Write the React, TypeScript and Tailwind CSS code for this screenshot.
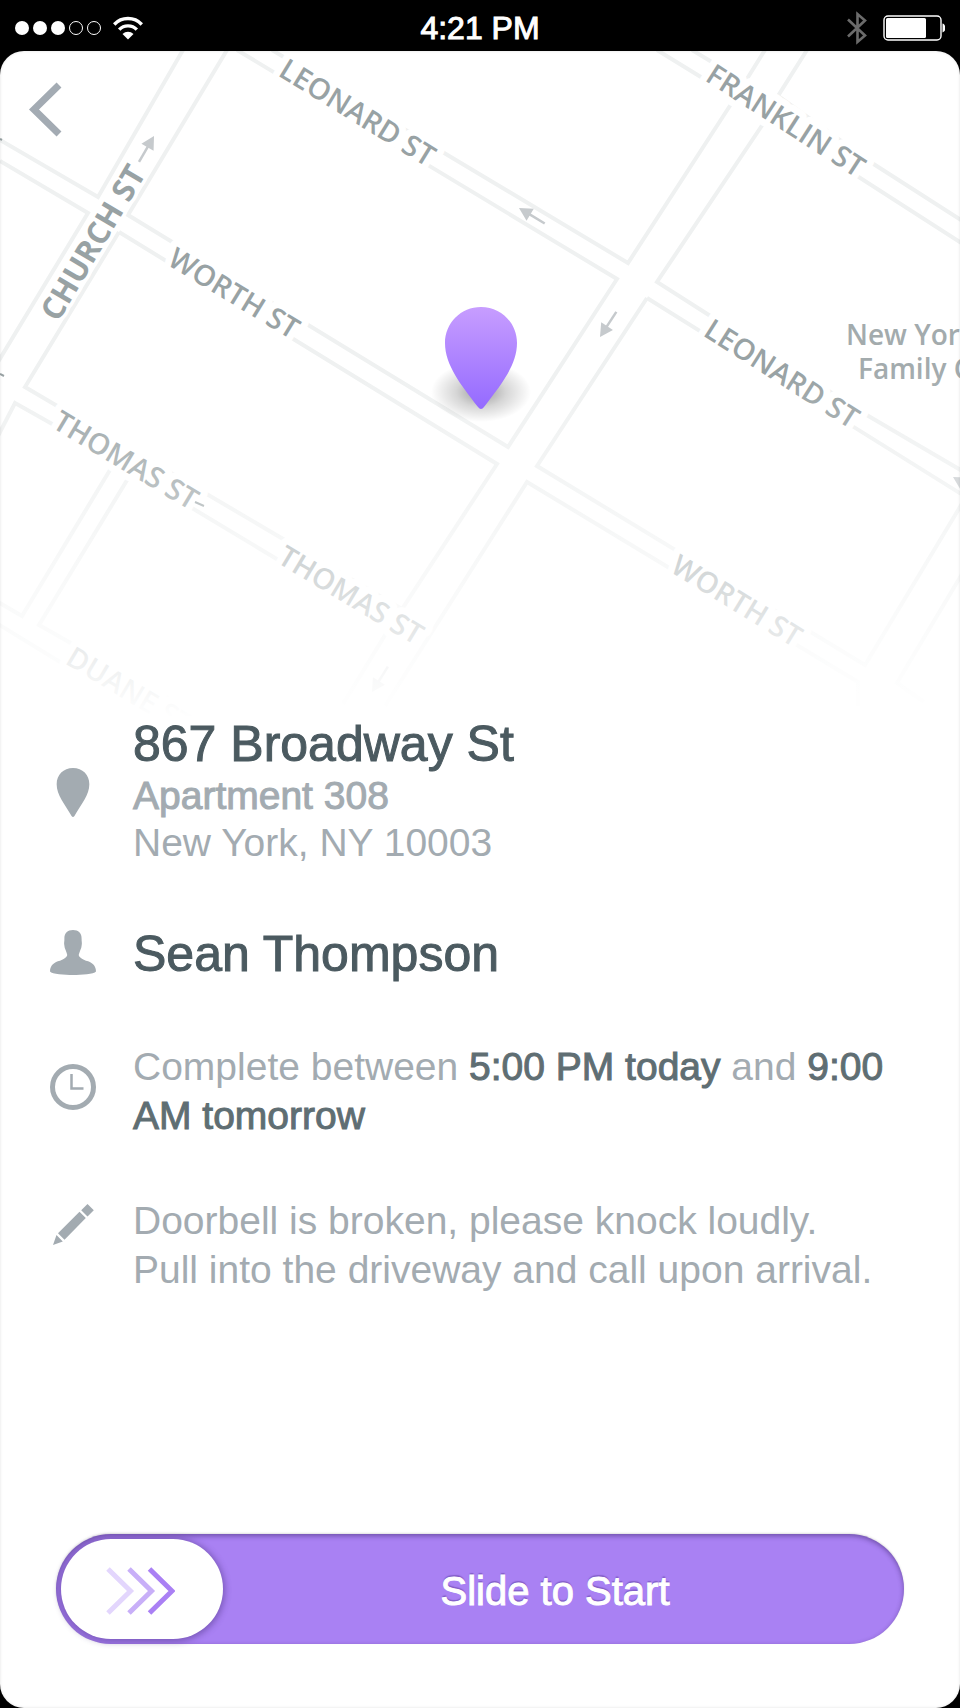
import React, { useState } from 'react';

interface StreetLabel { text: string; x: number; y: number; angle: number; }

// City blocks; the streets are the gaps between them
const blocks: string[] = [
    '183,50 98,197 0,140',
    '0,161 88,213 -2,362',
    '237,50 617,279 508,447 128,215 227,50',
    '657,50 735,98 628,263 272,50',
    '692,50 745,82 765,50',
    '807,50 778,96 872,163 964,222',
    '966,246 767,118 657,282 712,317 865,414 964,472',
    '647,298 966,497 865,665 537,466 647,298',
    '385,706 527,482 858,682 858,706',
    '962,574 897,683 924,702',
    '119,232 497,464 402,609 25,387 119,232',
    '-2,436 15,403 116,460 22,616 -2,602',
    '210,722 39,625 132,472 390,627 343,704',
    '-2,624 60,662 140,706',
];

const labels: StreetLabel[] = [
    { text: 'LEONARD ST', x: 277, y: 75, angle: 31.6 },
    { text: 'FRANKLIN ST', x: 704, y: 80, angle: 32.8 },
    { text: 'WORTH ST', x: 166, y: 264, angle: 31.2 },
    { text: 'LEONARD ST', x: 702, y: 335, angle: 32.4 },
    { text: 'THOMAS ST', x: 51, y: 427, angle: 31 },
    { text: 'THOMAS ST', x: 276, y: 562, angle: 31 },
    { text: 'WORTH ST', x: 669, y: 571, angle: 31.6 },
    { text: 'DUANE ST', x: 64, y: 663, angle: 31 },
];

// One-way arrows: tip position and heading in degrees
const arrows = [
    { x: 154, y: 136, angle: -60 },
    { x: 519, y: 208, angle: 211 },
    { x: 600, y: 337, angle: 123 },
    { x: 372, y: 692, angle: 122 },
    { x: 953, y: 477, angle: 211 },
];

const StreetMap: React.FC = () => (
    <svg viewBox="0 51 960 665" className="block w-full" role="img" aria-label="Map">
        <defs>
            <linearGradient id="fade" x1="0" y1="0" x2="0" y2="1">
                <stop offset="0" stopColor="#fff" stopOpacity="0" />
                <stop offset="1" stopColor="#fff" />
            </linearGradient>
            <linearGradient id="pin" x1="0" y1="0" x2="0" y2="1">
                <stop offset="0" stopColor="#c79dff" />
                <stop offset="1" stopColor="#946aff" />
            </linearGradient>
            <radialGradient id="pinShadow">
                <stop offset="0" stopColor="#000" stopOpacity="0.4" />
                <stop offset="0.5" stopColor="#000" stopOpacity="0.16" />
                <stop offset="1" stopColor="#000" stopOpacity="0" />
            </radialGradient>
        </defs>
        <g fill="none" stroke="#eff1f1" strokeWidth="4">
            {blocks.map(points => <polyline key={points} points={points} />)}
        </g>
        <g className="font-['Open_Sans',sans-serif] text-[29px] font-semibold" fill="#98a2a4" stroke="#fff" strokeLinejoin="round" style={{ paintOrder: 'stroke' }}>
            {labels.map(l => (
                <text key={`${l.text}${l.x}`} strokeWidth="14" transform={`translate(${l.x} ${l.y}) rotate(${l.angle})`}>
                    {l.text}
                </text>
            ))}
            <text className="text-[31px] font-bold" strokeWidth="7" transform="translate(58 323) rotate(-59.4)">CHURCH ST</text>
            <text x="846" y="345" className="text-[28px]" fill="#a3abad">New Yor</text>
            <text x="858" y="379" className="text-[28px]" fill="#a3abad">Family C</text>
        </g>
        <g fill="#c6cacd" stroke="#c6cacd">
            {arrows.map(a => (
                <g key={a.x} transform={`translate(${a.x} ${a.y}) rotate(${a.angle})`}>
                    <path d="M0 0 L-13 -7 V7 Z" stroke="none" />
                    <path d="M-12 0 H-30" strokeWidth="2.5" />
                </g>
            ))}
        </g>
        <path d="M0 139 l2 1 M0 374 l4 2 M195 502 l9 4" stroke="#98a2a4" strokeWidth="2" />
        <rect x="0" y="370" width="960" height="348" fill="url(#fade)" />
        <ellipse cx="481" cy="392" rx="50" ry="30" fill="url(#pinShadow)" />
        <path d="M481 307 C501 307 517 323 517 343 C517 365 501 385 484 407 Q481 411 478 407 C461 385 445 365 445 343 C445 323 461 307 481 307 Z" fill="url(#pin)" />
    </svg>
);

const StatusBar: React.FC = () => (
    <header className="flex h-[51px] shrink-0 items-center px-[15px] pt-1 text-white">
        <div className="flex flex-1 items-center gap-1">
            {[true, true, true, false, false].map((on, i) => (
                <span key={i} className={on ? 'size-[14px] rounded-full bg-white' : 'size-[14px] rounded-full border border-white'} />
            ))}
            <svg viewBox="0 0 30 24" className="ml-2 h-6 w-[30px]" fill="none" stroke="currentColor" strokeWidth="3.4">
                <path d="M1.2 8.5 A19 19 0 0 1 28.8 8.5" />
                <path d="M6.2 13.7 A12 12 0 0 1 23.8 13.7" />
                <path d="M15 23.5 L9.5 18 A8 8 0 0 1 20.5 18 Z" fill="currentColor" stroke="none" />
            </svg>
        </div>
        <time className="text-[32px] leading-9 [-webkit-text-stroke:1px]">4:21 PM</time>
        <div className="flex flex-1 items-center justify-end gap-4">
            <svg viewBox="0 0 20 34" className="h-[34px] w-5" fill="none" stroke="#6b6b6b" strokeWidth="2.6">
                <path d="M1 8.5 L18 24.5 L10.500 31 V3 L18 9.5 L1 25.5" />
            </svg>
            <svg viewBox="0 0 62 26" className="h-[26px] w-[62px]">
                <rect x="1" y="1" width="57" height="24" rx="4" fill="none" stroke="#fff" strokeWidth="1.4" />
                <rect x="3" y="3" width="40" height="20" rx="1.5" fill="#fff" />
                <path d="M59.5 8.5 C63.5 9.5 63.5 16.5 59.5 17.5 Z" fill="#fff" />
            </svg>
        </div>
    </header>
);

// --- Row icons ---

const PinIcon: React.FC = () => (
    <svg viewBox="0 0 34 51" className="h-[49px] w-[34px]" fill="currentColor">
        <path d="M17 0 C27 0 34 7 34 17 C34 28 26 37 18.5 50 Q17 52 15.5 50 C8 37 0 28 0 17 C0 7 7 0 17 0 Z" />
    </svg>
);

const PersonIcon: React.FC = () => (
    <svg viewBox="0 0 47 46" className="h-[45px] w-[46px]" fill="currentColor">
        <path d="M23.5 0 C29 0 32.5 3 32.3 9 C32.2 12 33 13 32.3 16 C32 19 31 20 30.5 22 C29.5 25 28.5 26 31 28 C33 30 36 31 39 32 C44 34 47 37 47 42.500 C45 45.300 32 46 23.500 46 C15 46 2 45.300 0 42.500 C0 37 3 34 8 32 C11 31 14 30 16 28 C18.500 26 17.500 25 16.500 22 C16 20 15 19 14.700 16 C14 13 14.800 12 14.700 9 C14.500 3 18 0 23.500 0 Z" />
    </svg>
);

const ClockIcon: React.FC = () => (
    <svg viewBox="0 0 46 46" className="size-[46px]" fill="none" stroke="currentColor">
        <circle cx="23" cy="23" r="20.5" strokeWidth="5" />
        <path d="M21.500 10 V24.500 H33.500" strokeWidth="2.5" />
    </svg>
);

const PencilIcon: React.FC = () => (
    <svg viewBox="0 0 41 41" className="size-[41px]" fill="currentColor">
        <path d="M34.500 0 L40.800 6.300 L34.500 12.600 L28.200 6.300 Z M26.500 7.700 L32.800 14 L11.500 35.700 L5 29.300 Z M3.500 31 L9.800 37.500 L0 41 Z" />
    </svg>
);

const Row: React.FC<{ icon: React.ReactNode; className?: string; iconClass?: string; children: React.ReactNode }> = ({ icon, className = '', iconClass = '', children }) => (
    <div className={`flex items-start gap-9 ${className}`}>
        <div className={`flex w-12 shrink-0 justify-center text-[#a3abb1] ${iconClass}`}>{icon}</div>
        <div className="min-w-0 flex-1">{children}</div>
    </div>
);

const SlideToStart: React.FC = () => {
    const [value, setValue] = useState(0);

    return (
        <label className="relative flex h-[110px] items-center rounded-full bg-[#a981f3] p-[5px] shadow-[inset_0_2px_5px_rgba(40,20,80,0.45),0_-1px_2px_rgba(0,0,0,0.12)]">
            <span
                className="z-10 flex h-[100px] w-[162px] shrink-0 items-center justify-center rounded-full bg-white pr-1 pt-1 shadow-[0_1px_6px_2px_rgba(60,35,110,0.42)]"
                style={{ marginLeft: `${value * 0.8}%` }}
            >
                <svg viewBox="0 0 69 48" className="h-12 w-[69px]" fill="none" strokeWidth="5">
                    <path d="M2 2 L24.500 24 L2 46" stroke="#e3d6fd" />
                    <path d="M23 2 L45.500 24 L23 46" stroke="#c8aff8" />
                    <path d="M43.500 2 L66 24 L43.500 46" stroke="#aa80f4" />
                </svg>
            </span>
            <span className="-ml-3 flex-1 pt-1 text-center text-[40px] leading-12 text-white [-webkit-text-stroke:1px] [text-shadow:0_-2px_1px_rgba(60,30,120,0.35)]">
                Slide to Start
            </span>
            <input
                type="range"
                min={0}
                max={100}
                value={value}
                onChange={e => setValue(Number(e.target.value))}
                className="absolute inset-0 z-20 h-full w-full cursor-pointer opacity-0"
            />
        </label>
    );
};

const App: React.FC = () => (
    <div className="flex min-h-screen flex-col bg-black font-['Liberation_Sans',Arial,sans-serif]">
        <StatusBar />
        <main className="relative flex flex-1 flex-col overflow-hidden rounded-[24px] bg-white">
            <StreetMap />
            <button type="button" aria-label="Back" className="absolute left-7 top-[30px] text-[#a3abb3]">
                <svg viewBox="0 0 34 56" className="h-14 w-[34px]" fill="none" stroke="currentColor" strokeWidth="7">
                    <path d="M31 4 L6 28.500 L31 53" />
                </svg>
            </button>

            <section className="pl-[49px] pr-12 text-[39px] leading-[49px] text-[#a3abb1]">
                <Row icon={<PinIcon />} iconClass="mt-[52px]">
                    <h1 className="text-[50px] leading-14 text-[#4b5a60] [-webkit-text-stroke:1px]">867 Broadway St</h1>
                    <p className="leading-[47px] [-webkit-text-stroke:1px]">Apartment 308</p>
                    <p className="leading-[47px]">New York, NY 10003</p>
                </Row>
                <Row icon={<PersonIcon />} className="mt-[60px]" iconClass="mt-1">
                    <h2 className="text-[50px] leading-14 text-[#4b5a60] [-webkit-text-stroke:1px]">Sean Thompson</h2>
                </Row>
                <Row icon={<ClockIcon />} className="mt-[60px]" iconClass="mt-[22px]">
                    <p>
                        Complete between <strong className="font-normal text-[#5f6e73] [-webkit-text-stroke:1px]">5:00 PM today</strong> and <strong className="font-normal text-[#5f6e73] [-webkit-text-stroke:1px]">9:00 AM tomorrow</strong>
                    </p>
                </Row>
                <Row icon={<PencilIcon />} className="mt-14" iconClass="mt-2">
                    <p>Doorbell is broken, please knock loudly.<br />Pull into the driveway and call upon arrival.</p>
                </Row>
            </section>

            <div className="mt-auto px-14 pb-16 pt-12">
                <SlideToStart />
            </div>
            <div className="pointer-events-none absolute inset-0 rounded-[24px] shadow-[inset_0_0_3px_rgba(0,0,0,0.12)]" />
        </main>
    </div>
);

export default App;
